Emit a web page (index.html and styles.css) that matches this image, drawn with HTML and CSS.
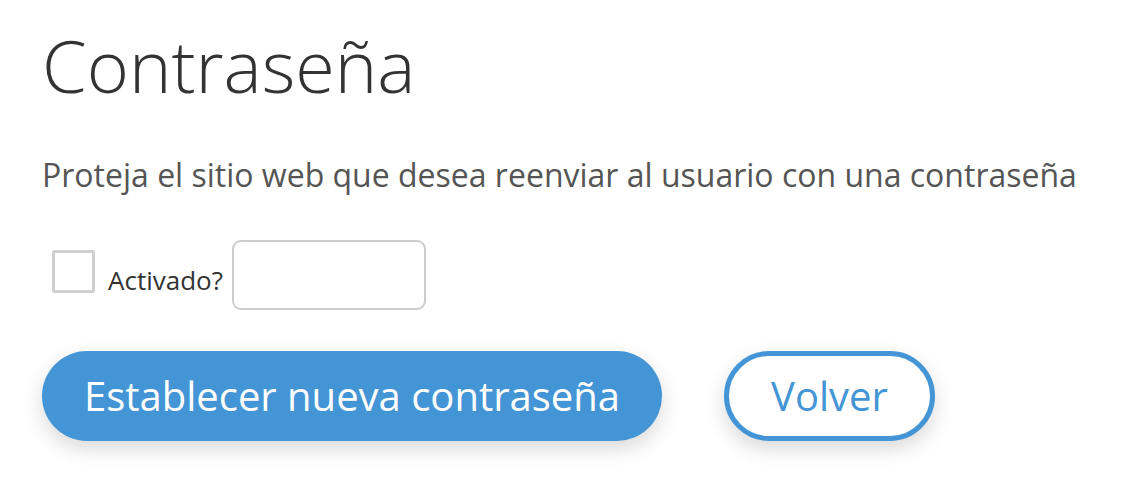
FILE: index.html
```html
<!DOCTYPE html>
<html lang="es">
<head>
<meta charset="utf-8">
<title>Contraseña</title>
<link rel="stylesheet" href="styles.css">
</head>
<body>
<main class="page">
  <h1 class="title">Contraseña</h1>
  <p class="lead">Proteja el sitio web que desea reenviar al usuario con una contraseña</p>
  <div class="field-row">
    <label class="check">
      <input type="checkbox" class="check-input">
      <span class="check-box"></span>
      <span class="check-label">Activado?</span>
    </label>
    <input type="text" class="text-input" aria-label="Contraseña">
  </div>
  <div class="actions">
    <button class="btn btn-primary" type="button">Establecer nueva contraseña</button>
    <button class="btn btn-outline" type="button">Volver</button>
  </div>
</main>
</body>
</html>
```

FILE: styles.css
```css
html, body {
  margin: 0;
  padding: 0;
  background: #ffffff;
}

body {
  font-family: "Open Sans", "Noto Sans", sans-serif;
  color: #333333;
}

.page {
  padding: 22px 0 40px 42px;
}

.title {
  margin: 0;
  font-size: 72px;
  font-weight: 300;
  line-height: 1.2;
  color: #333333;
}

.lead {
  margin: 48px 0 0 0;
  font-size: 32px;
  line-height: 38px;
  color: #555555;
}

.field-row {
  display: flex;
  align-items: center;
  margin-top: 46px;
  height: 70px;
}

.check {
  display: flex;
  align-items: center;
  cursor: pointer;
}

.check-input {
  position: absolute;
  opacity: 0;
  width: 0;
  height: 0;
  margin: 0;
}

.check-box {
  box-sizing: border-box;
  width: 43px;
  height: 43px;
  margin-left: 10px;
  margin-top: -7px;
  border: 3px solid #cfcfcf;
  border-radius: 2px;
  background: #ffffff;
}

.check-label {
  margin-left: 13px;
  margin-top: 9px;
  font-size: 26px;
  color: #333333;
}

.text-input {
  box-sizing: border-box;
  width: 194px;
  height: 70px;
  margin-left: 9px;
  border: 2px solid #cccccc;
  border-radius: 9px;
  background: #ffffff;
  font-family: inherit;
  font-size: 24px;
  padding: 0 12px;
  outline: none;
}

.actions {
  display: flex;
  gap: 62px;
  margin-top: 41px;
}

.btn {
  box-sizing: border-box;
  height: 90px;
  border-radius: 45px;
  font-family: "Open Sans", "Noto Sans", sans-serif;
  font-size: 40px;
  font-weight: 400;
  line-height: 1;
  cursor: pointer;
  box-shadow: 0 8px 20px rgba(0, 0, 0, 0.15);
}

.btn-primary {
  width: 620px;
  border: none;
  background: #4495d5;
  color: #ffffff;
}

.btn-outline {
  width: 211px;
  border: 5px solid #4495d5;
  background: #ffffff;
  color: #4495d5;
}
```
